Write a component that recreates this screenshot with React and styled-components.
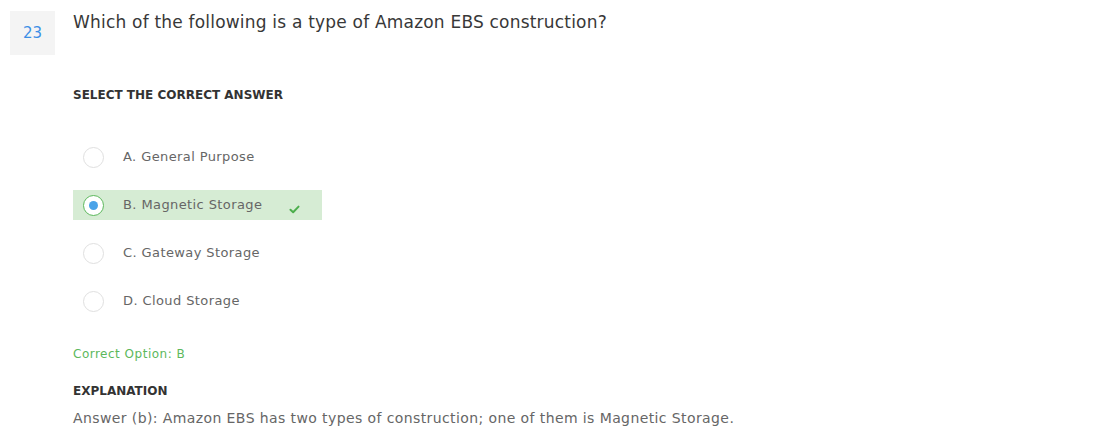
import React from "react";
import styled, { createGlobalStyle } from "styled-components";

const GlobalStyle = createGlobalStyle`
  body {
    margin: 0;
    background: #fff;
    font-family: "DejaVu Sans", "Liberation Sans", sans-serif;
  }
`;

const options = [
  { key: "A", label: "General Purpose" },
  { key: "B", label: "Magnetic Storage", correct: true },
  { key: "C", label: "Gateway Storage" },
  { key: "D", label: "Cloud Storage" },
];

const App = () => {
  return (
    <>
      <GlobalStyle />
      <Question>
        <Header>
          <NumBox>23</NumBox>
          <Title>Which of the following is a type of Amazon EBS construction?</Title>
        </Header>
        <Body>
          <Label $gap={32}>SELECT THE CORRECT ANSWER</Label>
          <OptionList>
            {options.map((o) => (
              <Option key={o.key} $selected={o.correct}>
                <Radio $selected={o.correct} />
                <OptionText>
                  {o.key}. {o.label}
                </OptionText>
                {o.correct && (
                  <Check viewBox="0 0 12 10">
                    <path
                      d="M1.5 5.2 L4.5 8 L10.5 1.8"
                      fill="none"
                      stroke="#4cae4c"
                      strokeWidth="2.2"
                      strokeLinecap="round"
                      strokeLinejoin="round"
                    />
                  </Check>
                )}
              </Option>
            ))}
          </OptionList>
          <Correct>Correct Option: B</Correct>
          <Label $gap={21}>EXPLANATION</Label>
          <Explain>
            Answer (b): Amazon EBS has two types of construction; one of them is
            Magnetic Storage.
          </Explain>
        </Body>
      </Question>
    </>
  );
};

export default App;

const Question = styled.div`
  padding: 11px 10px 0 10px;
`;

const Header = styled.div`
  display: flex;
  align-items: flex-start;
  gap: 18px;
`;

const NumBox = styled.div`
  width: 45px;
  height: 44px;
  background: #f4f4f4;
  color: #3c8fe6;
  font-size: 15px;
  display: flex;
  align-items: center;
  justify-content: center;
`;

const Title = styled.div`
  font-size: 17px;
  letter-spacing: 0.2px;
  color: #383838;
  line-height: 22px;
  margin-top: 0;
`;

const Body = styled.div`
  padding-left: 63px;
`;

const Label = styled.div`
  font-size: 12px;
  font-weight: 700;
  color: #333;
  margin-top: ${(p) => p.$gap}px;
  line-height: 16px;
`;

const OptionList = styled.div`
  display: flex;
  flex-direction: column;
  gap: 18px;
  margin-top: 39px;
`;

const Option = styled.div`
  display: flex;
  align-items: center;
  width: 249px;
  height: 30px;
  padding-left: 10px;
  box-sizing: border-box;
  background: ${(p) => (p.$selected ? "#d6ecd4" : "transparent")};
`;

const Radio = styled.div`
  width: 21px;
  height: 21px;
  flex-shrink: 0;
  border-radius: 50%;
  box-sizing: border-box;
  border: 1px solid ${(p) => (p.$selected ? "#5cb85c" : "#e0e0e0")};
  background: #fff;
  display: flex;
  align-items: center;
  justify-content: center;
  &::after {
    content: "";
    display: ${(p) => (p.$selected ? "block" : "none")};
    width: 9px;
    height: 9px;
    border-radius: 50%;
    background: #4aa3e8;
  }
`;

const OptionText = styled.div`
  font-size: 13px;
  letter-spacing: 0.4px;
  color: #666;
  margin-left: 19px;
  margin-top: -1px;
  white-space: nowrap;
`;

const Check = styled.svg`
  width: 11px;
  height: 9px;
  margin-left: 27px;
  margin-top: 8px;
`;

const Correct = styled.div`
  font-size: 12px;
  letter-spacing: 0.5px;
  color: #5cb85c;
  margin-top: 30px;
  line-height: 16px;
`;

const Explain = styled.div`
  font-size: 14px;
  letter-spacing: 0.4px;
  color: #666;
  margin-top: 9px;
  line-height: 20px;
`;
